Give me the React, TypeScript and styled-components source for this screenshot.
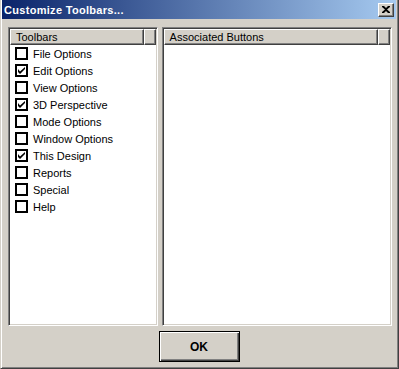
import React from "react";
import styled, { createGlobalStyle } from "styled-components";

const Global = createGlobalStyle`
  html, body { margin: 0; padding: 0; background: #d4d0c8; }
  body { font-family: "Liberation Sans", Arial, sans-serif; font-size: 11px; }
`;

const Window = styled.div`
  width: 399px;
  height: 369px;
  box-sizing: border-box;
  background: #d4d0c8;
  border-style: solid;
  border-width: 0 1px 1px 1px;
  border-color: #d4d0c8 #404040 #404040 #d4d0c8;
  box-shadow: inset 1px 0 0 #ffffff, inset -1px -1px 0 #808080;
  padding: 0 2px 2px 1px;
  display: flex;
  flex-direction: column;
`;

const TitleBar = styled.div`
  height: 19px;
  background: linear-gradient(to right, #0a246a, #a6caf0);
  display: flex;
  align-items: center;
  justify-content: space-between;
  padding: 0 2px 0 2px;
  flex-shrink: 0;
`;

const Title = styled.span`
  color: #ffffff;
  font-weight: bold;
  font-size: 11px;
  letter-spacing: 0.3px;
`;

const CloseButton = styled.div`
  width: 16px;
  height: 14px;
  box-sizing: border-box;
  background: #d4d0c8;
  border-style: solid;
  border-width: 1px;
  border-color: #ffffff #404040 #404040 #ffffff;
  box-shadow: inset -1px -1px 0 #808080;
  display: flex;
  align-items: center;
  justify-content: center;
`;

const Body = styled.div`
  flex: 1;
  display: flex;
  flex-direction: column;
  padding: 8px 4px 4px 6px;
`;

const Panels = styled.div`
  display: flex;
  gap: 4px;
  height: 299px;
`;

const Panel = styled.div<{ $w: number }>`
  width: ${(p) => p.$w}px;
  box-sizing: border-box;
  background: #ffffff;
  border-style: solid;
  border-width: 1px;
  border-color: #808080 #ffffff #ffffff #808080;
  box-shadow: inset 1px 1px 0 #404040, inset -1px -1px 0 #d4d0c8;
  padding: 1px;
  display: flex;
  flex-direction: column;
`;

const HeaderRow = styled.div`
  display: flex;
  height: 16px;
  flex-shrink: 0;
`;

const HeaderCell = styled.div<{ $grow?: boolean }>`
  ${(p) => (p.$grow ? "flex: 1;" : "width: 8px;")}
  box-sizing: border-box;
  background: #d4d0c8;
  border-style: solid;
  border-width: 1px;
  border-color: #ffffff #404040 #404040 #ffffff;
  box-shadow: inset -1px -1px 0 #808080;
  padding: 0 5px;
  color: #000;
  line-height: 14px;
  white-space: nowrap;
  overflow: hidden;
`;

const List = styled.div`
  display: flex;
  flex-direction: column;
  padding: 0 0 0 5px;
`;

const Row = styled.div`
  display: flex;
  align-items: center;
  height: 17px;
  gap: 5px;
  color: #000;
`;

const Box = styled.div`
  width: 13px;
  height: 13px;
  box-sizing: border-box;
  border: 2px solid #000;
  background: #fff;
  display: flex;
  align-items: center;
  justify-content: center;
`;

const Footer = styled.div`
  display: flex;
  justify-content: center;
  padding-top: 5px;
  padding-right: 2px;
`;

const OkButton = styled.div`
  width: 81px;
  height: 31px;
  box-sizing: border-box;
  background: #d4d0c8;
  border: 1px solid #000;
  box-shadow: inset 1px 1px 0 #ffffff, inset -1px -1px 0 #404040, inset -2px -2px 0 #808080;
  display: flex;
  align-items: center;
  justify-content: center;
  font-weight: bold;
  font-size: 12px;
  color: #000;
`;

const items: [string, boolean][] = [
  ["File Options", false],
  ["Edit Options", true],
  ["View Options", false],
  ["3D Perspective", true],
  ["Mode Options", false],
  ["Window Options", false],
  ["This Design", true],
  ["Reports", false],
  ["Special", false],
  ["Help", false],
];

export default function App() {
  return (
    <>
      <Global />
      <Window>
        <TitleBar>
          <Title>Customize Toolbars...</Title>
          <CloseButton>
            <svg width="8" height="7" viewBox="0 0 8 7">
              <path d="M0 0h2l2 2 2-2h2v1L5 3.5 8 6v1H6L4 5 2 7H0V6l3-2.5L0 1z" fill="#000" />
            </svg>
          </CloseButton>
        </TitleBar>
        <Body>
          <Panels>
            <Panel $w={150}>
              <HeaderRow>
                <HeaderCell $grow>Toolbars</HeaderCell>
                <HeaderCell />
              </HeaderRow>
              <List>
                {items.map(([label, checked]) => (
                  <Row key={label}>
                    <Box>
                      {checked && (
                        <svg width="7" height="7" viewBox="0 0 7 7">
                          <path d="M0 2v3l2 2 5-5V0L2 4.5z" fill="#000" />
                        </svg>
                      )}
                    </Box>
                    <span>{label}</span>
                  </Row>
                ))}
              </List>
            </Panel>
            <Panel $w={231}>
              <HeaderRow>
                <HeaderCell $grow>Associated Buttons</HeaderCell>
                <HeaderCell />
              </HeaderRow>
            </Panel>
          </Panels>
          <Footer>
            <OkButton>OK</OkButton>
          </Footer>
        </Body>
      </Window>
    </>
  );
}
